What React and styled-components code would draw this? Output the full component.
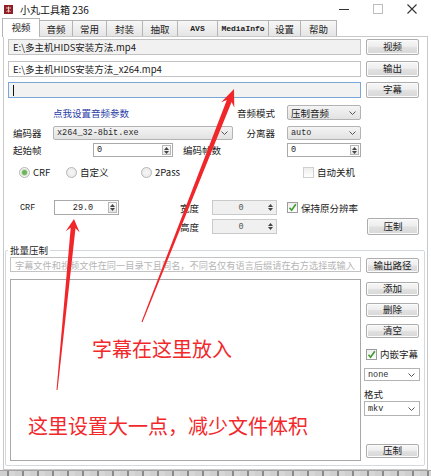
import React from 'react';
import styled, { createGlobalStyle, css } from 'styled-components';

const CJK = `"Noto Sans CJK SC", "Liberation Sans", sans-serif`;
const MONO = `"Liberation Mono", "DejaVu Sans Mono", monospace`;

const GlobalStyle = createGlobalStyle`
  html, body { margin: 0; padding: 0; background: #fff; }
  body { font-family: ${CJK}; font-size: 9.5px; color: #1b1b1b; }
  * { box-sizing: border-box; }
`;

// shared spacing props for controls sitting in a row
const offset = css`
  margin-left: ${(p) => p.$ml || 0}px;
  margin-top: ${(p) => p.$mt || 0}px;
  flex-shrink: 0;
`;

const Window = styled.div`
  position: relative;
  width: 431px;
  height: 476px;
  overflow: hidden;
  display: flex;
  flex-direction: column;
  background: #fff;
`;

const TitleBar = styled.div`
  height: 18px;
  flex-shrink: 0;
  display: flex;
  align-items: center;
  padding-left: 4px;
`;

const Title = styled.span`
  margin-left: 7px;
  font-size: 10px;
  color: #111;
`;

const Controls = styled.div`
  margin-left: auto;
  margin-right: 2px;
  display: flex;
`;

const Ctrl = styled.div`
  width: 34px;
  height: 18px;
  display: flex;
  align-items: center;
  justify-content: center;
`;

const TabStrip = styled.div`
  height: 18px;
  flex-shrink: 0;
  display: flex;
  align-items: flex-end;
  padding-left: 3px;
  position: relative;
  z-index: 2;
`;

const Tab = styled.div`
  width: ${(p) => p.$w}px;
  height: ${(p) => (p.$active ? 19 : 16)}px;
  margin-bottom: ${(p) => (p.$active ? -1 : 0)}px;
  margin-left: -1px;
  padding-bottom: ${(p) => (p.$active ? 2 : 0)}px;
  display: flex;
  align-items: center;
  justify-content: center;
  border: 1px solid #b4b4b4;
  border-bottom: none;
  background: ${(p) => (p.$active ? '#fff' : 'linear-gradient(#f7f7f7, #e5e5e5)')};
  font-family: ${(p) => (p.$mono ? MONO : CJK)};
  font-size: ${(p) => (p.$mono ? '8px' : '9.5px')};
  font-weight: ${(p) => (p.$mono ? 700 : 400)};
  position: relative;
  z-index: ${(p) => (p.$active ? 2 : 1)};
`;

const Panel = styled.div`
  flex: 1;
  margin: 0 3px;
  border: 1px solid #c9c9c9;
  padding: 2px 0 0 4px;
  display: flex;
  flex-direction: column;
  position: relative;
  z-index: 1;
`;

const Desk = styled.div`
  height: 6px;
  flex-shrink: 0;
  border-top: 1px solid #a3a3a3;
  background: repeating-linear-gradient(90deg, #cfcfcf 0 7px, #8a8a8a 7px 9px, #d6d6d6 9px 15px);
`;

const Row = styled.div`
  display: flex;
  align-items: center;
  height: ${(p) => p.$h}px;
  margin-top: ${(p) => p.$mt || 0}px;
  flex-shrink: 0;
`;

const TextBox = styled.div`
  ${offset}
  width: ${(p) => p.$w}px;
  height: ${(p) => p.$h || 16}px;
  border: 1px solid ${(p) => (p.$focus ? '#7aa7d8' : '#c3c3c3')};
  background: ${(p) => p.$bg || '#fff'};
  display: flex;
  align-items: center;
  padding-left: 4px;
  white-space: nowrap;
  overflow: hidden;
  color: ${(p) => (p.$hint ? '#b5b5b5' : '#1b1b1b')};
  font-size: ${(p) => (p.$hint ? '9.2px' : '9.5px')};
`;

const Caret = styled.span`
  width: 1px;
  height: 11px;
  background: #111;
`;

const Button = styled.button`
  ${offset}
  width: ${(p) => p.$w || 53}px;
  height: ${(p) => p.$h || 16}px;
  padding: 0;
  font-family: ${CJK};
  font-size: 9.5px;
  color: #1b1b1b;
  line-height: 1;
  border: 1px solid #adadad;
  border-radius: 2px;
  background: linear-gradient(#f7f7f7 0%, #eeeeee 45%, #e0e0e0 55%, #d8d8d8 100%);
  box-shadow: inset 0 0 0 1px #fbfbfb;
  display: flex;
  align-items: center;
  justify-content: center;
`;

const Label = styled.span`
  ${offset}
  width: ${(p) => (p.$w ? `${p.$w}px` : 'auto')};
  text-align: ${(p) => (p.$right ? 'right' : 'left')};
  font-family: ${(p) => (p.$mono ? MONO : CJK)};
  font-size: ${(p) => (p.$mono ? '8.5px' : '9.5px')};
  white-space: nowrap;
`;

const Link = styled(Label)`
  color: #2b3ea8;
`;

const ComboBox = styled.div`
  ${offset}
  width: ${(p) => p.$w}px;
  height: ${(p) => p.$h || 14}px;
  border: 1px solid #b3b3b3;
  border-radius: ${(p) => (p.$plain ? 0 : 2)}px;
  background: ${(p) => (p.$plain ? '#fff' : 'linear-gradient(#f4f4f4, #e2e2e2)')};
  display: flex;
  align-items: center;
  padding: 0 4px 0 3px;
  font-family: ${(p) => (p.$mono ? MONO : CJK)};
  font-size: ${(p) => (p.$mono ? '8.5px' : '9.5px')};
  color: ${(p) => (p.$mono ? '#2a2a2a' : '#1b1b1b')};
`;

const ComboText = styled.span`
  flex: 1;
  overflow: hidden;
  white-space: nowrap;
`;

const SpinBox = styled.div`
  ${offset}
  width: ${(p) => p.$w}px;
  height: ${(p) => p.$h || 14}px;
  border: 1px solid ${(p) => (p.$disabled ? '#cacaca' : '#a9a9a9')};
  background: ${(p) => (p.$disabled ? '#f0f0f0' : '#fff')};
  display: flex;
  align-items: center;
  padding: 0 1px 0 3px;
  font-family: ${MONO};
  font-size: 8.5px;
  color: ${(p) => (p.$disabled ? '#555' : '#222')};
`;

const SpinValue = styled.span`
  flex: 1;
  text-align: ${(p) => (p.$center ? 'center' : 'left')};
`;

const SpinArrows = styled.div`
  width: 9px;
  height: calc(100% - 2px);
  border: 1px solid ${(p) => (p.$disabled ? 'transparent' : '#b8b8b8')};
  background: ${(p) => (p.$disabled ? 'transparent' : 'linear-gradient(#fbfbfb, #e6e6e6)')};
  display: flex;
  flex-direction: column;
  align-items: center;
  justify-content: space-around;
`;

const Option = styled.div`
  ${offset}
  width: ${(p) => (p.$w ? `${p.$w}px` : 'auto')};
  display: flex;
  align-items: center;
  gap: 3px;
  white-space: nowrap;
`;

const RadioDot = styled.span`
  width: 11px;
  height: 11px;
  border-radius: 50%;
  border: 1px solid #b5b5b5;
  background: ${(p) =>
    p.$on
      ? 'radial-gradient(circle, #6fb35a 0 2px, #c9e2bf 3px, #f4f4f4 4px)'
      : 'radial-gradient(circle, #f7f7f7, #e6e6e6)'};
`;

const CheckBox = styled.span`
  width: 11px;
  height: 11px;
  border: 1px solid ${(p) => (p.$pale ? '#cfcfcf' : '#9c9c9c')};
  background: linear-gradient(#eeeeee, #ffffff);
  display: flex;
  align-items: center;
  justify-content: center;
`;

const Group = styled.fieldset`
  margin: 9px 2px 0 -3px;
  padding: 0 0 4px 4px;
  border: 1px solid #d3d9de;
  border-radius: 2px;
  min-width: 0;
`;

const Legend = styled.legend`
  padding: 0 2px;
  margin-left: -2px;
  font-size: 9.5px;
  line-height: 13px;
`;

const GroupBody = styled.div`
  display: grid;
  grid-template-columns: 351px 53px;
  grid-template-rows: 16px 182px;
  column-gap: 5px;
  row-gap: 6px;
`;

const FileList = styled.div`
  border: 1px solid #a8a8a8;
  background: #fff;
`;

const SideColumn = styled.div`
  display: flex;
  flex-direction: column;
`;

const PushDown = styled.div`
  margin-top: auto;
  margin-bottom: 3px;
`;

const Overlay = styled.div`
  position: absolute;
  inset: 0;
  pointer-events: none;
  z-index: 5;
`;

const Note = styled.span`
  position: absolute;
  left: ${(p) => p.$x}px;
  top: ${(p) => p.$y}px;
  font-family: ${CJK};
  font-size: 20px;
  line-height: 20px;
  color: #f2282b;
  white-space: nowrap;
`;

const Chevron = () => (
  <svg width="7" height="4" viewBox="0 0 7 4">
    <path d="M0.5 0.5 L3.5 3.5 L6.5 0.5" fill="none" stroke="#555" strokeWidth="1" />
  </svg>
);

const Tick = () => (
  <svg width="9" height="9" viewBox="0 0 9 9">
    <path d="M1.5 4.8 L3.6 7.2 L7.8 1.2" fill="none" stroke="#3f9a2d" strokeWidth="1.6" />
  </svg>
);

const Combo = ({ value, ...rest }) => (
  <ComboBox {...rest}>
    <ComboText>{value}</ComboText>
    <Chevron />
  </ComboBox>
);

const Spin = ({ value, $center, $disabled, ...rest }) => (
  <SpinBox $disabled={$disabled} {...rest}>
    <SpinValue $center={$center}>{value}</SpinValue>
    <SpinArrows $disabled={$disabled}>
      <svg width="5" height="3" viewBox="0 0 5 3">
        <path d="M0 3 L2.5 0 L5 3 Z" fill="#444" />
      </svg>
      <svg width="5" height="3" viewBox="0 0 5 3">
        <path d="M0 0 L2.5 3 L5 0 Z" fill="#444" />
      </svg>
    </SpinArrows>
  </SpinBox>
);

const Radio = ({ on, children, ...rest }) => (
  <Option {...rest}>
    <RadioDot $on={on} />
    <span>{children}</span>
  </Option>
);

const Check = ({ on, pale, children, ...rest }) => (
  <Option {...rest}>
    <CheckBox $pale={pale}>{on && <Tick />}</CheckBox>
    <span>{children}</span>
  </Option>
);

// tapered red arrow from tail to tip
const arrowPoints = (x1, y1, x2, y2, head = 7, headLen = 16, neck = 2.4, tail = 0.5) => {
  const dx = x2 - x1;
  const dy = y2 - y1;
  const len = Math.hypot(dx, dy);
  const ux = dx / len;
  const uy = dy / len;
  const at = (d, w) => [x1 + ux * d - uy * w, y1 + uy * d + ux * w];
  return [
    at(0, tail),
    at(len - headLen + 4, neck),
    at(len - headLen, head),
    at(len, 0),
    at(len - headLen, -head),
    at(len - headLen + 4, -neck),
    at(0, -tail),
  ]
    .map((pt) => pt.map((v) => v.toFixed(1)).join(','))
    .join(' ');
};

const tabs = [
  { label: '视频', w: 38, active: true },
  { label: '音频', w: 34 },
  { label: '常用', w: 35 },
  { label: '封装', w: 37 },
  { label: '抽取', w: 36 },
  { label: 'AVS', w: 41, mono: true },
  { label: 'MediaInfo', w: 52, mono: true },
  { label: '设置', w: 33 },
  { label: '帮助', w: 37 },
];

export default function App() {
  return (
    <Window>
      <GlobalStyle />
      <TitleBar>
        <svg width="9" height="9" viewBox="0 0 9 9">
          <rect width="9" height="9" fill="#8e1f24" />
          <path d="M2 3 H7 M4.5 1.5 V7.5 M2.5 7 L4.5 5 L6.5 7" stroke="#f3d6d6" strokeWidth="0.9" fill="none" />
        </svg>
        <Title>小丸工具箱 236</Title>
        <Controls>
          <Ctrl>
            <svg width="10" height="10" viewBox="0 0 10 10">
              <path d="M0 5.5 H10" stroke="#333" strokeWidth="1" />
            </svg>
          </Ctrl>
          <Ctrl>
            <svg width="10" height="10" viewBox="0 0 10 10">
              <rect x="0.5" y="0.5" width="9" height="9" fill="none" stroke="#bdbdbd" />
            </svg>
          </Ctrl>
          <Ctrl>
            <svg width="10" height="10" viewBox="0 0 10 10">
              <path d="M0.5 0.5 L9.5 9.5 M9.5 0.5 L0.5 9.5" stroke="#333" strokeWidth="1.1" />
            </svg>
          </Ctrl>
        </Controls>
      </TitleBar>

      <TabStrip>
        {tabs.map((t) => (
          <Tab key={t.label} $w={t.w} $active={t.active} $mono={t.mono}>
            {t.label}
          </Tab>
        ))}
      </TabStrip>

      <Panel>
        <Row $h={16}>
          <TextBox $w={353} $bg="#f1f1f1">E:\多主机HIDS安装方法.mp4</TextBox>
          <Button $ml={5}>视频</Button>
        </Row>
        <Row $h={16} $mt={6}>
          <TextBox $w={353}>E:\多主机HIDS安装方法_x264.mp4</TextBox>
          <Button $ml={5}>输出</Button>
        </Row>
        <Row $h={16} $mt={5}>
          <TextBox $w={353} $bg="#f2f2f2" $focus>
            <Caret />
          </TextBox>
          <Button $ml={5}>字幕</Button>
        </Row>

        <Row $h={15} $mt={7}>
          <Link $ml={45} $w={80}>点我设置音频参数</Link>
          <Label $w={142} $right>音频模式</Label>
          <Combo $ml={12} $w={74} $h={15} value="压制音频" />
        </Row>
        <Row $h={14} $mt={6}>
          <Label $ml={5} $w={40}>编码器</Label>
          <Combo $w={180} $mono value="x264_32-8bit.exe" />
          <Label $w={42} $right>分离器</Label>
          <Combo $ml={12} $w={74} $mono value="auto" />
        </Row>
        <Row $h={14} $mt={3}>
          <Label $ml={5} $w={80}>起始帧</Label>
          <Spin $w={80} value="0" />
          <Label $ml={10} $w={104}>编码帧数</Label>
          <Spin $w={74} value="0" />
        </Row>
        <Row $h={12} $mt={9}>
          <Radio $ml={11} $w={47} on>CRF</Radio>
          <Radio $w={75}>自定义</Radio>
          <Radio $w={162}>2Pass</Radio>
          <Check pale>自动关机</Check>
        </Row>
        <Row $h={15} $mt={22}>
          <Label $ml={12} $w={34} $mono>CRF</Label>
          <Spin $w={65} $h={15} $center value="29.0" />
          <Label $ml={61} $w={32}>宽度</Label>
          <Spin $w={65} $h={15} $center $disabled value="0" />
          <Check $ml={10} on>保持原分辨率</Check>
        </Row>
        <Row $h={17} $mt={3}>
          <Label $ml={172} $w={32}>高度</Label>
          <Spin $w={65} $h={15} $center $disabled value="0" />
          <Button $ml={90} $w={52} $h={17}>压制</Button>
        </Row>

        <Group>
          <Legend>批量压制</Legend>
          <GroupBody>
            <TextBox $w={351} $h={15} $hint $bg="#fff">
              字幕文件和视频文件在同一目录下且同名，不同名仅有语言后缀请在右方选择或输入
            </TextBox>
            <Button $mt={1} $h={15}>输出路径</Button>
            <FileList />
            <SideColumn>
              <Button $mt={3} $h={14}>添加</Button>
              <Button $mt={7} $h={14}>删除</Button>
              <Button $mt={7} $h={14}>清空</Button>
              <Check $mt={9} on>内嵌字幕</Check>
              <Combo $mt={7} $ml={-2} $w={56} $h={13} $plain $mono value="none" />
              <Label $mt={6} $ml={-2}>格式</Label>
              <Combo $ml={-2} $w={56} $h={15} $plain $mono value="mkv" />
              <PushDown>
                <Button $h={14}>压制</Button>
              </PushDown>
            </SideColumn>
          </GroupBody>
        </Group>
      </Panel>
      <Desk />

      <Overlay>
        <svg width="431" height="476" viewBox="0 0 431 476">
          <polygon points={arrowPoints(142, 322, 234, 89, 7, 17, 2.6)} fill="#f0262a" />
          <polygon points={arrowPoints(57, 390, 74, 219, 7, 13, 2.4)} fill="#f0262a" />
        </svg>
        <Note $x={92} $y={339}>字幕在这里放入</Note>
        <Note $x={28} $y={416}>这里设置大一点，减少文件体积</Note>
      </Overlay>
    </Window>
  );
}
